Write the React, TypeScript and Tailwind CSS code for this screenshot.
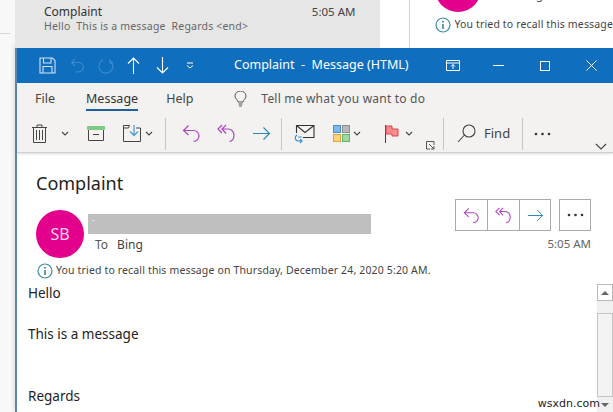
import React from 'react';

const Chevron = ({ className = '' }: { className?: string }) => (
  <svg width="8" height="5" viewBox="0 0 8 5" className={className} fill="none" stroke="#444" strokeWidth="1.1">
    <path d="M1 1l3 3 3-3" />
  </svg>
);

const Sep = ({ className = '' }: { className?: string }) => <div className={`w-px h-8 bg-[#c8c6c4] shrink-0 ${className}`} />;

const Reply = ({ size = 19, color = '#b146c2' }: { size?: number; color?: string }) => (
  <svg width={size} height={size} viewBox="0 0 19 19" fill="none" stroke={color} strokeWidth="1.2">
    <path d="M6.500 1.500L1.500 6.500l5 4.500M1.500 6.500h10c3 0 5.500 2.500 5.500 5.500s-2.500 5.500-5.500 5.500" />
  </svg>
);

const ReplyAll = ({ size = 19 }: { size?: number }) => (
  <svg width={size} height={size} viewBox="0 0 19 19" fill="none" stroke="#b146c2" strokeWidth="1.2">
    <path d="M5 1L1 5l4 4M9 1L5 5l4 4.500M5 5h6.500c3 0 5.500 3 5.500 6.500 0 3-2 6-4.500 6" />
  </svg>
);

const Forward = ({ size = 19 }: { size?: number }) => (
  <svg width={size} height={size} viewBox="0 0 19 19" fill="none" stroke="#2b88b8" strokeWidth="1.1">
    <path d="M1 9.500h16.500M11.500 3.500l6 6-6 6" />
  </svg>
);

const Dots = () => (
  <svg width="17" height="4" viewBox="0 0 17 4" fill="#333">
    <circle cx="2" cy="2" r="1.300" />
    <circle cx="8.500" cy="2" r="1.300" />
    <circle cx="15" cy="2" r="1.300" />
  </svg>
);

const Info = () => (
  <svg width="16" height="16" viewBox="0 0 16 16" fill="none" className="shrink-0">
    <circle cx="8" cy="8" r="7" stroke="#3a8ca8" strokeWidth="1.200" />
    <path d="M8 7v5" stroke="#2a6f86" strokeWidth="1.400" />
    <circle cx="8" cy="4.700" r="0.900" fill="#2a6f86" />
  </svg>
);

const TitleBar = () => (
  <div className="h-[35px] bg-[#106ebe] flex items-center text-white shrink-0">
    <svg width="17" height="17" viewBox="0 0 17 17" fill="none" stroke="#cfe3f5" strokeWidth="1.100" className="ml-[22px]">
      <path d="M1 1h12.500L16 3.500V16H1zM4.500 1v5h7.500V1M4 16v-6.500h9V16" />
    </svg>
    <svg width="15" height="15" viewBox="0 0 15 15" fill="none" stroke="#3f8bcf" strokeWidth="1.100" className="ml-[14px]">
      <path d="M5 1L1.500 4.500 5 8M1.500 4.500H9c2.500 0 4.500 2 4.500 4.500S11 14 8 14H5.500" />
    </svg>
    <svg width="16" height="16" viewBox="0 0 16 16" fill="none" stroke="#3f8bcf" strokeWidth="1.100" className="ml-[13px]">
      <path d="M12 2.500A7 7 0 1 1 5 1.800M12 1v4h3" />
    </svg>
    <svg width="13" height="17" viewBox="0 0 13 17" fill="none" stroke="white" strokeWidth="1.100" className="ml-[13px]">
      <path d="M6.500 17V1M1 6.500L6.500 1 12 6.500" />
    </svg>
    <svg width="13" height="17" viewBox="0 0 13 17" fill="none" stroke="white" strokeWidth="1.100" className="ml-[16px]">
      <path d="M6.500 0v16M1 10.500L6.500 16 12 10.500" />
    </svg>
    <svg width="8" height="7" viewBox="0 0 8 7" fill="none" stroke="white" strokeWidth="1" className="ml-[17px]">
      <path d="M1 1h6M1 3.500l3 2.500 3-2.500" />
    </svg>
    <span className="ml-[40px] text-[12.5px] whitespace-pre">Complaint  -  Message (HTML)</span>
    <svg width="14" height="11" viewBox="0 0 14 11" fill="none" stroke="white" strokeWidth="1" className="ml-[37px]">
      <path d="M.5 .5h13v10H.5zM.5 3h13M7 9V4.500M5 6.500l2-2 2 2" />
    </svg>
    <div className="w-[11px] h-px bg-white ml-[33px]" />
    <div className="w-[10px] h-[10px] border border-white ml-[36px]" />
    <svg width="11" height="11" viewBox="0 0 11 11" fill="none" stroke="white" strokeWidth="1" className="ml-[36px]">
      <path d="M.5 .5l10 10M10.500 .5l-10 10" />
    </svg>
  </div>
);

const MenuBar = () => (
  <div className="h-[32px] flex items-center text-[12.5px] text-[#444] shrink-0">
    <span className="ml-[18px]">File</span>
    <span className="ml-[31px] relative text-[#333]">
      Message
      <span className="absolute left-0 right-0 -bottom-[3px] h-[2px] bg-[#1f5f9a]" />
    </span>
    <span className="ml-[28px]">Help</span>
    <svg width="13" height="16" viewBox="0 0 13 16" fill="none" stroke="#555" strokeWidth="1" className="ml-[41px]">
      <path d="M4 11c0-2-3-3-3-6a5.500 5 0 0 1 11 0c0 3-3 4-3 6zM4.500 13h4M5 15h3" />
    </svg>
    <span className="ml-[14px] text-[12px] text-[#555] tracking-[0.2px]">Tell me what you want to do</span>
  </div>
);

const Toolbar = () => (
  <div className="h-[38px] flex items-center shrink-0 relative border-b border-[#d2d0ce]">
    <svg width="15" height="19" viewBox="0 0 15 19" fill="none" stroke="#444" strokeWidth="1" className="ml-[15px]">
      <path d="M0 3.500h15M5 3V1h5v2M1.500 4v14.500h12V4M4.500 6v10M7.500 6v10M10.500 6v10" />
    </svg>
    <Chevron className="ml-[14px]" />
    <svg width="18" height="15" viewBox="0 0 18 15" fill="none" className="ml-[18px]">
      <rect x="0" y="0" width="18" height="4" fill="#7ecb86" />
      <path d="M1.500 4v10.500h15V4M6 8.500h6" stroke="#444" strokeWidth="1" />
    </svg>
    <svg width="19" height="17" viewBox="0 0 19 17" fill="none" className="ml-[18px]">
      <path d="M.5 3h5l1-2.500H.5zM.5 3v13.500h17V3H13" stroke="#444" strokeWidth="1" />
      <path d="M11 0v10M7 6.500l4 4 4-4" stroke="#4aa0d8" strokeWidth="1.300" />
    </svg>
    <Chevron className="ml-[3px]" />
    <Sep className="ml-[12px]" />
    <div className="ml-[16px] flex"><Reply /></div>
    <div className="ml-[16px] flex"><ReplyAll /></div>
    <div className="ml-[16px] flex"><Forward /></div>
    <Sep className="ml-[10px]" />
    <svg width="21" height="20" viewBox="0 0 21 20" fill="none" className="ml-[12px]">
      <path d="M2.500 9V1.500h17.500v12H9M2.500 1.500l8.500 7 9-7" stroke="#333" strokeWidth="1.100" />
      <path d="M3 11c-3 2-2 6 2 6h3M6 15l2 2-2 2M8 13H4" stroke="#3b8fd0" strokeWidth="1.100" />
    </svg>
    <div className="ml-[18px] grid grid-cols-2 gap-[1px]">
      <div className="w-[8px] h-[8px] bg-[#7cb9ec] border border-[#4a8cc7]" />
      <div className="w-[8px] h-[8px] bg-[#b8b8b8] border border-[#8e8e8e]" />
      <div className="w-[8px] h-[8px] bg-[#fcd27e] border border-[#dca63e]" />
      <div className="w-[8px] h-[8px] bg-[#9ed9a4] border border-[#62b26b]" />
    </div>
    <Chevron className="ml-[3px]" />
    <svg width="14" height="18" viewBox="0 0 14 18" fill="none" className="ml-[24px]">
      <path d="M.5 0v18" stroke="#444" strokeWidth="1" />
      <path d="M1 1h6v3h6v7H7V9H1z" fill="#f98b8b" stroke="#d9444c" strokeWidth="1" />
    </svg>
    <Chevron className="ml-[6px]" />
    <svg width="9" height="9" viewBox="0 0 9 9" fill="none" stroke="#555" strokeWidth="1" className="ml-[13px] self-end mb-[2px]">
      <path d="M8 4V.5H.5V8H4M3 3l5 5M8 5v3H5" />
    </svg>
    <Sep className="ml-[8px]" />
    <svg width="19" height="19" viewBox="0 0 19 19" fill="none" stroke="#444" strokeWidth="1.100" className="ml-[13px]">
      <circle cx="12" cy="7" r="6" />
      <path d="M7.500 11L1 18" />
    </svg>
    <span className="ml-[8px] text-[13px] text-[#444]">Find</span>
    <Sep className="ml-[12px]" />
    <div className="ml-[11px] flex"><Dots /></div>
    <svg width="12" height="7" viewBox="0 0 12 7" fill="none" stroke="#444" strokeWidth="1.100" className="absolute right-[6px] bottom-[2px]">
      <path d="M1 1l5 5 5-5" />
    </svg>
  </div>
);

const ActionButtons = () => (
  <div className="flex flex-col items-end">
    <div className="flex gap-2">
      <div className="flex h-[32px] border border-[#ababab] divide-x divide-[#ababab]">
        <div className="w-[32px] flex items-center justify-center"><Reply size={17} /></div>
        <div className="w-[32px] flex items-center justify-center"><ReplyAll size={17} /></div>
        <div className="w-[30px] flex items-center justify-center"><Forward size={17} /></div>
      </div>
      <div className="w-[32px] h-[32px] border border-[#ababab] flex items-center justify-center"><Dots /></div>
    </div>
    <span className="mt-[4px] text-[11.5px] leading-[17px] text-[#666]">5:05 AM</span>
  </div>
);

const Scrollbar = () => (
  <div className="w-[16px] shrink-0 bg-[#f0f0f0] flex flex-col h-full">
    <div className="h-[17px] bg-white border border-[#b8b8b8] flex items-center justify-center shrink-0">
      <div className="w-0 h-0 border-x-[4px] border-x-transparent border-b-[4px] border-b-[#666]" />
    </div>
    <div className="h-[84px] mt-[12px] bg-[#f3f3f3] border border-[#c4c4c4] shrink-0" />
    <div className="flex-1 flex items-center justify-center">
      <div className="w-0 h-0 border-x-[4px] border-x-transparent border-t-[4px] border-t-[#666]" />
    </div>
  </div>
);

export default function App() {
  return (
    <div className="w-[613px] h-[412px] relative overflow-hidden bg-[#f8f8f8] font-['Noto_Sans','Open_Sans',sans-serif]">
      {/* mailbox behind the window */}
      <div className="h-[48px] flex">
        <div className="w-[15px] pt-[33px] shrink-0">
          <div className="w-[10px] h-px bg-[#d8d8d8]" />
        </div>
        <div className="w-[367px] bg-[#e6e6e6] flex text-[#444]">
          <div className="ml-[29px] mt-[5px]">
            <div className="text-[12px] leading-[14px] text-[#333]">Complaint</div>
            <div className="text-[10.5px] leading-[14px] text-[#666] tracking-[0.2px] whitespace-pre">Hello  This is a message  Regards &lt;end&gt;</div>
          </div>
          <span className="ml-auto mr-[25px] mt-[5px] text-[11.5px] leading-[14px]">5:05 AM</span>
        </div>
        <div className="w-[29px] bg-white shrink-0" />
        <div className="flex-1 bg-white border-l border-[#d4d4d4] pl-[25px]">
          <div className="flex h-[13px] overflow-hidden">
            <div className="w-[46px] h-[46px] rounded-full bg-[#e3008c] -mt-[34px] shrink-0" />
            <span className="ml-[15px] -mt-[14px] h-[17px] text-[12px] leading-[17px] text-[#555] flex">
              <span>To</span>
              <span className="ml-[8px]">Bing</span>
            </span>
          </div>
          <div className="flex items-center gap-[3px] mt-[4px] whitespace-nowrap text-[10.5px] text-[#444] tracking-[0.15px]">
            <Info />
            <span>You tried to recall this message</span>
          </div>
        </div>
      </div>

      {/* message window */}
      <div className="ml-[15px] h-[364px] border-l-2 border-[#5d87b0] bg-white flex flex-col shadow-[0_-2px_5px_rgba(0,0,0,0.18)]">
        <TitleBar />
        <div className="bg-[#f3f2f1] shadow-[0_1px_2px_rgba(0,0,0,0.15)]">
          <MenuBar />
          <Toolbar />
        </div>

        <div className="flex justify-between pt-[20px] pl-[19px] pr-[22px] h-[131px] shrink-0">
          <div>
            <h1 className="text-[18px] leading-[20px] text-[#222]">Complaint</h1>
            <div className="flex mt-[17px]">
              <div className="w-[48px] h-[48px] rounded-full bg-[#e3008c] text-[#ffd6ee] text-[16px] flex items-center justify-center shrink-0">SB</div>
              <div className="ml-[4px] mt-[4px]">
                <div className="w-[283px] h-[20px] bg-[#bfbfbf] text-white text-[8px] leading-[12px] pl-[4px]">-</div>
                <div className="mt-[2px] text-[12px] text-[#555] pl-[7px] flex">
                  <span>To</span>
                  <span className="ml-[9px] text-[#444]">Bing</span>
                </div>
              </div>
            </div>
            <div className="flex items-center gap-[3px] mt-[5px] ml-[1px] text-[10.5px] text-[#444] tracking-[0.15px] whitespace-nowrap">
              <Info />
              <span>You tried to recall this message on Thursday, December 24, 2020 5:20 AM.</span>
            </div>
          </div>
          <div className="pt-[26px]"><ActionButtons /></div>
        </div>

        <div className="flex flex-1 min-h-0">
          <div className="flex-1 pl-[11px] text-[13.5px] leading-[20.6px] text-[#222] -mt-[1px]">
            <p>Hello</p>
            <p className="mt-[20.6px]">This is a message</p>
            <p className="mt-[41.200px]">Regards</p>
          </div>
          <Scrollbar />
        </div>
      </div>

      <span className="absolute right-[13px] bottom-[0px] text-[11px] text-[#222] font-['DejaVu_Sans',sans-serif]">wsxdn.com</span>
    </div>
  );
}
